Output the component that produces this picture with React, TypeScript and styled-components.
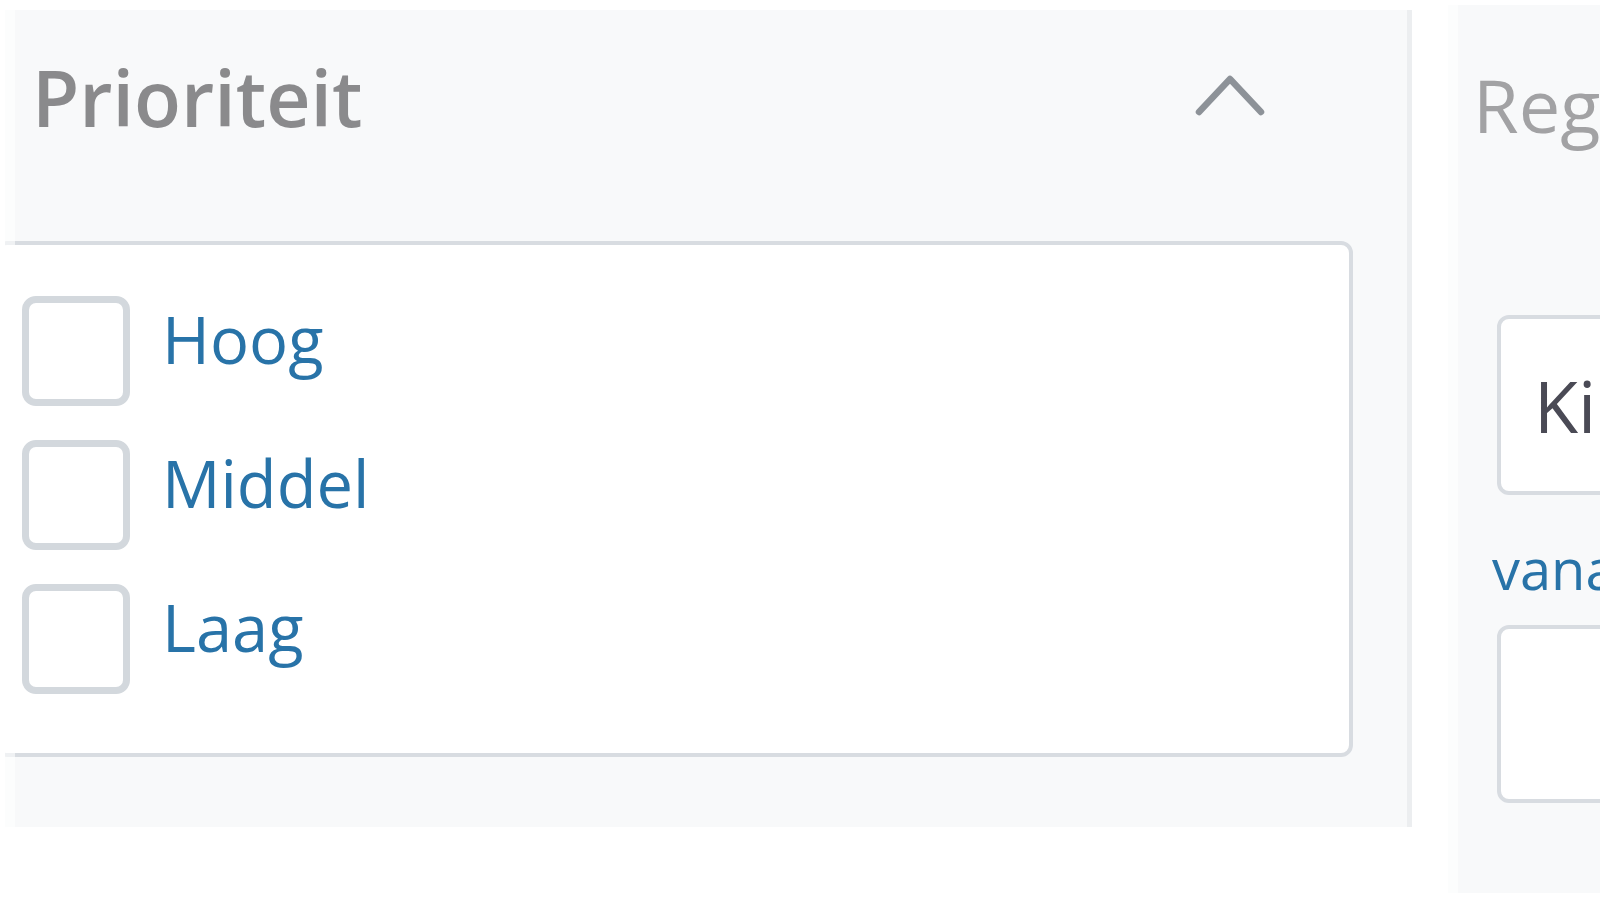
import React from "react";
import styled, { createGlobalStyle } from "styled-components";

const GlobalStyle = createGlobalStyle`
  html, body {
    margin: 0;
    padding: 0;
    background: #ffffff;
    overflow: hidden;
    font-family: "Open Sans", "Noto Sans", sans-serif;
  }
  * { box-sizing: border-box; }
`;

const Page = styled.div`
  display: flex;
  align-items: flex-start;
  gap: 36px;
  padding-left: 5px;
  width: 1600px;
  height: 900px;
  overflow: hidden;
`;

const Panel = styled.section<{ $top: number; $height: number; $width: number; $edge?: boolean }>`
  position: relative;
  flex: 0 0 ${(p) => p.$width}px;
  width: ${(p) => p.$width}px;
  height: ${(p) => p.$height}px;
  margin-top: ${(p) => p.$top}px;
  background: #f8f9fa;
  border-right: ${(p) => (p.$edge ? "5px solid #eceef0" : "none")};
  overflow: hidden;
  display: flex;
  flex-direction: column;

  &::before {
    content: "";
    position: absolute;
    left: 0;
    top: 0;
    bottom: 0;
    width: 10px;
    background: rgba(255, 255, 255, 0.6);
    z-index: 2;
  }
`;

const Header = styled.div`
  display: flex;
  justify-content: space-between;
  align-items: flex-start;
  height: 231px;
  padding: 35px 142px 0 27px;
`;

const Title = styled.h2`
  margin: 0;
  font-family: "Open Sans", sans-serif;
  font-size: 77px;
  font-weight: 600;
  line-height: 105px;
  color: #8a8a8c;
  letter-spacing: 0;
`;

const ToggleIcon = styled.svg`
  display: block;
  margin-top: 29px;
  width: 70px;
  height: 42px;
`;

const Card = styled.div`
  margin: 0 54px 0 -10px;
  height: 516px;
  background: #ffffff;
  border: 4px solid #d8dce1;
  border-radius: 12px;
  padding: 51px 0 0 23px;
  display: flex;
  flex-direction: column;
  gap: 34px;
`;

const Option = styled.label`
  display: flex;
  align-items: flex-start;
  gap: 32px;
  cursor: pointer;
`;

const Box = styled.span`
  flex: 0 0 108px;
  width: 108px;
  height: 110px;
  border: 7px solid #d3d8dd;
  border-radius: 14px;
  background: #ffffff;
`;

const OptionText = styled.span`
  font-family: "Open Sans", sans-serif;
  font-size: 65px;
  font-weight: 400;
  line-height: 86px;
  color: #2873a8;
`;

const SideTitle = styled.h2`
  margin: 0;
  padding: 49px 0 0 25px;
  font-family: "Open Sans", sans-serif;
  font-size: 74px;
  font-weight: 400;
  line-height: normal;
  color: #a2a2a4;
  white-space: nowrap;
`;

const Field = styled.div<{ $height: number }>`
  margin-left: 49px;
  width: 600px;
  height: ${(p) => p.$height}px;
  background: #ffffff;
  border: 4px solid #d8dce1;
  border-radius: 12px;
  display: flex;
  align-items: center;
  padding-left: 33px;
  font-family: "Open Sans", sans-serif;
  font-size: 72px;
  color: #4a4a55;
  white-space: nowrap;
`;

const FieldLabel = styled.div`
  margin: 35px 0 19px 44px;
  font-family: "Open Sans", sans-serif;
  font-size: 56px;
  line-height: normal;
  color: #2873a8;
  white-space: nowrap;
`;

const Spacer = styled.div<{ $h: number }>`
  height: ${(p) => p.$h}px;
  flex: 0 0 ${(p) => p.$h}px;
`;

const options = ["Hoog", "Middel", "Laag"];

export default function App() {
  return (
    <>
      <GlobalStyle />
      <Page>
        <Panel $top={10} $height={817} $width={1407} $edge>
          <Header>
            <Title>Prioriteit</Title>
            <ToggleIcon viewBox="0 0 70 42" aria-hidden="true">
              <polyline
                points="4,38 35,5 66,38"
                fill="none"
                stroke="#8d9298"
                strokeWidth="6.5"
                strokeLinejoin="round"
                strokeLinecap="round"
              />
            </ToggleIcon>
          </Header>
          <Card>
            {options.map((o) => (
              <Option key={o}>
                <Box />
                <OptionText>{o}</OptionText>
              </Option>
            ))}
          </Card>
        </Panel>
        <Panel $top={5} $height={888} $width={600}>
          <SideTitle>Registratiedatum</SideTitle>
          <Spacer $h={160} />
          <Field $height={180}>Kies een periode</Field>
          <FieldLabel>vanaf</FieldLabel>
          <Field $height={178} />
        </Panel>
      </Page>
    </>
  );
}
